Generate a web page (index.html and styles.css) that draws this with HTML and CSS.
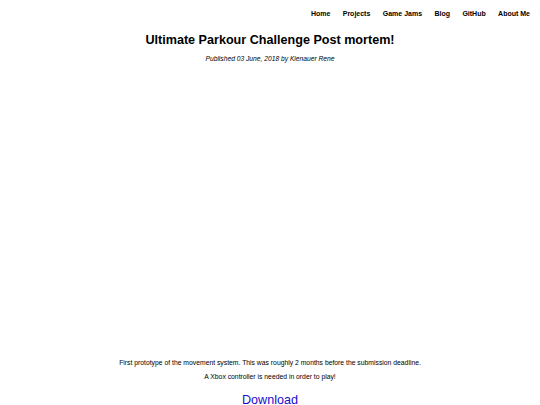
FILE: index.html
```html
<!DOCTYPE html>
<html>
<head>
<meta charset="utf-8">
<link rel="stylesheet" href="styles.css">
</head>
<body>
<nav class="nav">
  <a href="#">Home</a>
  <a href="#">Projects</a>
  <a href="#">Game Jams</a>
  <a href="#">Blog</a>
  <a href="#">GitHub</a>
  <a href="#">About Me</a>
</nav>
<main class="post">
  <h1 class="title">Ultimate Parkour Challenge Post mortem!</h1>
  <p class="meta">Published 03 June, 2018 by Kienauer Rene</p>
  <div class="video"></div>
  <p class="text">First prototype of the movement system. This was roughly 2 months before the submission deadline.</p>
  <p class="text">A Xbox controller is needed in order to play!</p>
  <a class="download" href="#">Download</a>
</main>
</body>
</html>
```
FILE: styles.css
```css
html, body { margin: 0; padding: 0; background: #fff; }
body { font-family: "Liberation Sans", Arial, sans-serif; color: #000; }
.nav {
  display: flex;
  justify-content: flex-end;
  gap: 12.4px;
  padding: 10px 10px 0 0;
}
.nav a { font-size: 7px; font-weight: bold; color: #000; text-decoration: none; }
.post { display: flex; flex-direction: column; align-items: center; }
.title { font-size: 12.6px; font-weight: bold; margin: 16px 0 0; }
.meta { font-size: 6.7px; font-style: italic; margin: 8px 0 0; }
.video { height: 297px; }
.text { font-size: 6.8px; margin: 0 0 7px; }
.download { font-size: 12.6px; color: #1a0dcc; text-decoration: none; margin-top: 6px; }
```
